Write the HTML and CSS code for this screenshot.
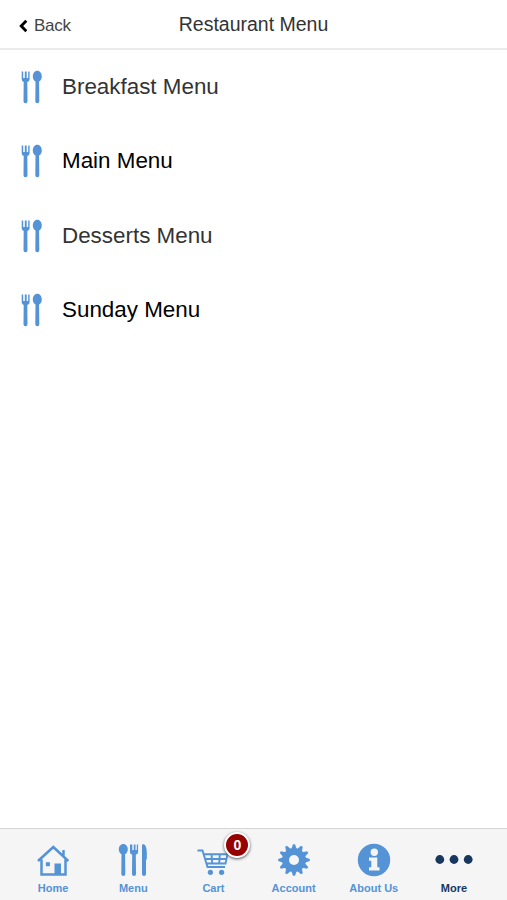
FILE: index.html
```
<!DOCTYPE html>
<html lang="en">
<head>
    <meta charset="UTF-8">
    <meta name="viewport" content="width=device-width, initial-scale=1.0">
    <title>Restaurant Menu</title>
    <link rel="stylesheet" href="styles.css">
</head>
<body>
    <!-- shared icon shapes -->
    <svg class="sprite">
        <symbol id="cutlery" viewBox="0 0 24 34">
            <path d="M1.700 1.500V9c0 1.700.8 2.400 2 2.900L3.500 31.200a2 2 0 0 0 4 0L7.300 11.900C8.600 11.400 9.600 10.700 9.600 9V1.500H8.200V8H6.700V1.500H4.800V8H3.200V1.500Z"/>
            <path d="M17.300 .8c-2.700 0-4.500 2.700-4.500 5.600 0 2.400 1.100 4.200 2.700 5.200l-.2 19.600a2 2 0 0 0 4 0l-.2-19.600c1.600-1 2.700-2.800 2.700-5.200C21.800 3.500 20 .8 17.300.8Z"/>
        </symbol>
    </svg>

    <div class="header">
        <a class="back" href="#">
            <svg class="chevron" viewBox="0 0 9 14"><path d="M7.300 1.700 2.200 7l5.100 5.300"/></svg>
            <span>Back</span>
        </a>
        <h1 class="title">Restaurant Menu</h1>
    </div>

    <div class="menu-list">
        <a class="menu-item" href="#"><svg class="menu-icon"><use href="#cutlery"/></svg>Breakfast Menu</a>
        <a class="menu-item dark" href="#"><svg class="menu-icon"><use href="#cutlery"/></svg>Main Menu</a>
        <a class="menu-item" href="#"><svg class="menu-icon"><use href="#cutlery"/></svg>Desserts Menu</a>
        <a class="menu-item dark" href="#"><svg class="menu-icon"><use href="#cutlery"/></svg>Sunday Menu</a>
    </div>

    <div class="tabs">
        <a class="tab" href="#">
            <svg class="tab-icon" viewBox="0 0 34 34">
                <path class="line" d="M2 18 17.300 4l15 14M5.500 16.500V31.500h24V16.500M27.500 12.500V7"/>
                <path d="M18.500 20.500h6.500v11h-6.500zM9.900 19.300h4v4h-4z"/>
            </svg>
            <span>Home</span>
        </a>
        <a class="tab" href="#">
            <svg class="tab-icon" viewBox="0 0 34 34">
                <path d="M7.300 1C4.800 1 2.800 3.400 2.800 6.200c0 2.300 1.200 4.200 2.700 5.100l-.2 19.700a2 2 0 0 0 4 0l-.2-19.700c1.600-.9 2.700-2.800 2.700-5.100C11.800 3.400 9.800 1 7.300 1Z"/>
                <path d="M14 1.500V9c0 1.500.9 2.300 2.200 2.700L16 31a2 2 0 0 0 4 0l-.2-19.300c1.300-.4 2.300-1.200 2.300-2.700V1.500h-1.300V7h-1.300V1.500h-1.700V7h-1.500V1.500Z"/>
                <path d="M26 2.500c0-1.300 1.300-1.700 2.400-1 1.700 1.100 2.400 4.500 2.400 8.500v6l-.8 1v14a2 2 0 0 1-4 0Z"/>
            </svg>
            <span>Menu</span>
        </a>
        <a class="tab" href="#">
            <svg class="tab-icon" viewBox="0 0 34 34">
                <path class="cart-line" d="M1.500 7.500h5l5 16.500h17.500M7.500 11.300h24L29.500 20.500H10.300M8.800 16h22M15.500 11.500l.7 9M23.800 11.500l-.6 9"/>
                <circle cx="14.400" cy="29.300" r="2.600"/>
                <circle cx="25.600" cy="29.300" r="2.600"/>
            </svg>
            <span>Cart</span>
            <b class="badge">0</b>
        </a>
        <a class="tab" href="#">
            <svg class="tab-icon" viewBox="0 0 34 34">
                <defs><path id="teeth" d="M14 7 16 1.200h2L20 7v20L18 32.800h-2L14 27Z"/></defs>
                <use href="#teeth"/>
                <use href="#teeth" transform="rotate(30 17 17)"/>
                <use href="#teeth" transform="rotate(60 17 17)"/>
                <use href="#teeth" transform="rotate(90 17 17)"/>
                <use href="#teeth" transform="rotate(120 17 17)"/>
                <use href="#teeth" transform="rotate(150 17 17)"/>
                <circle cx="17" cy="17" r="12"/>
                <circle class="hole" cx="17" cy="17" r="5"/>
            </svg>
            <span>Account</span>
        </a>
        <a class="tab" href="#">
            <svg class="tab-icon" viewBox="0 0 34 34">
                <circle cx="17" cy="17" r="16.200"/>
                <circle class="hole" cx="17.300" cy="9.200" r="3.700"/>
                <path class="hole" d="M12 14.500h8.300v9.700h2.200v3.300H12v-3.300h2.300v-6.500H12Z"/>
            </svg>
            <span>About Us</span>
        </a>
        <a class="tab more" href="#">
            <svg class="tab-icon" viewBox="0 0 34 34">
                <circle cx="2.800" cy="16.500" r="4.400"/>
                <circle cx="17" cy="16.500" r="4.400"/>
                <circle cx="31.200" cy="16.500" r="4.400"/>
            </svg>
            <span>More</span>
        </a>
    </div>
</body>
</html>
```
FILE: styles.css
```
* {
    box-sizing: border-box;
}

body {
    margin: 0;
    height: 100vh;
    display: flex;
    flex-direction: column;
    background-color: #ffffff;
    font-family: "Liberation Sans", Arial, sans-serif;
}

a {
    color: inherit;
    text-decoration: none;
}

.sprite {
    display: none;
}

.header {
    height: 50px;
    flex: none;
    display: grid;
    grid-template-columns: 1fr auto 1fr;
    border-bottom: 2px solid #ebebeb;
}

.back {
    display: flex;
    align-items: center;
    gap: 6px;
    padding: 4px 0 0 19px;
    color: #444444;
    font-size: 17px;
    letter-spacing: -0.3px;
}

.chevron {
    width: 9px;
    height: 14px;
    fill: none;
    stroke: #000000;
    stroke-width: 2.8;
}

.title {
    margin: 0;
    color: #333333;
    font-size: 19.5px;
    font-weight: normal;
    line-height: 48px;
}

.menu-list {
    flex: 1;
}

.menu-item {
    display: flex;
    align-items: center;
    gap: 18px;
    height: 74.5px;
    padding: 0 0 1px 20px;
    color: #333333;
    font-size: 22.4px;
}

.dark {
    color: #000000;
}

.menu-icon {
    width: 24px;
    height: 34px;
    fill: #5493d6;
}

.tabs {
    height: 72px;
    flex: none;
    display: flex;
    padding: 0 13px;
    background-color: #f5f5f5;
    border-top: 1px solid #d5d5d5;
}

.tab {
    position: relative;
    flex: 1;
    display: flex;
    flex-direction: column;
    align-items: center;
    gap: 4px;
    padding-top: 14px;
    color: #5493d6;
    font-size: 11px;
    font-weight: bold;
    line-height: 14px;
}

.tab-icon {
    width: 34px;
    height: 34px;
    fill: currentColor;
    overflow: visible;
}

.line {
    fill: none;
    stroke: currentColor;
    stroke-width: 2.5;
}

.cart-line {
    fill: none;
    stroke: currentColor;
    stroke-width: 1.9;
}

.hole {
    fill: #f5f5f5;
}

.more {
    color: #17375e;
}

.badge {
    position: absolute;
    top: 3px;
    left: 51px;
    width: 26px;
    height: 26px;
    border: 2px solid #ffffff;
    border-radius: 50%;
    background-color: #960000;
    box-shadow: 0 1px 3px #555555;
    color: #ffffff;
    font-size: 14px;
    line-height: 23px;
    text-align: center;
}
```
